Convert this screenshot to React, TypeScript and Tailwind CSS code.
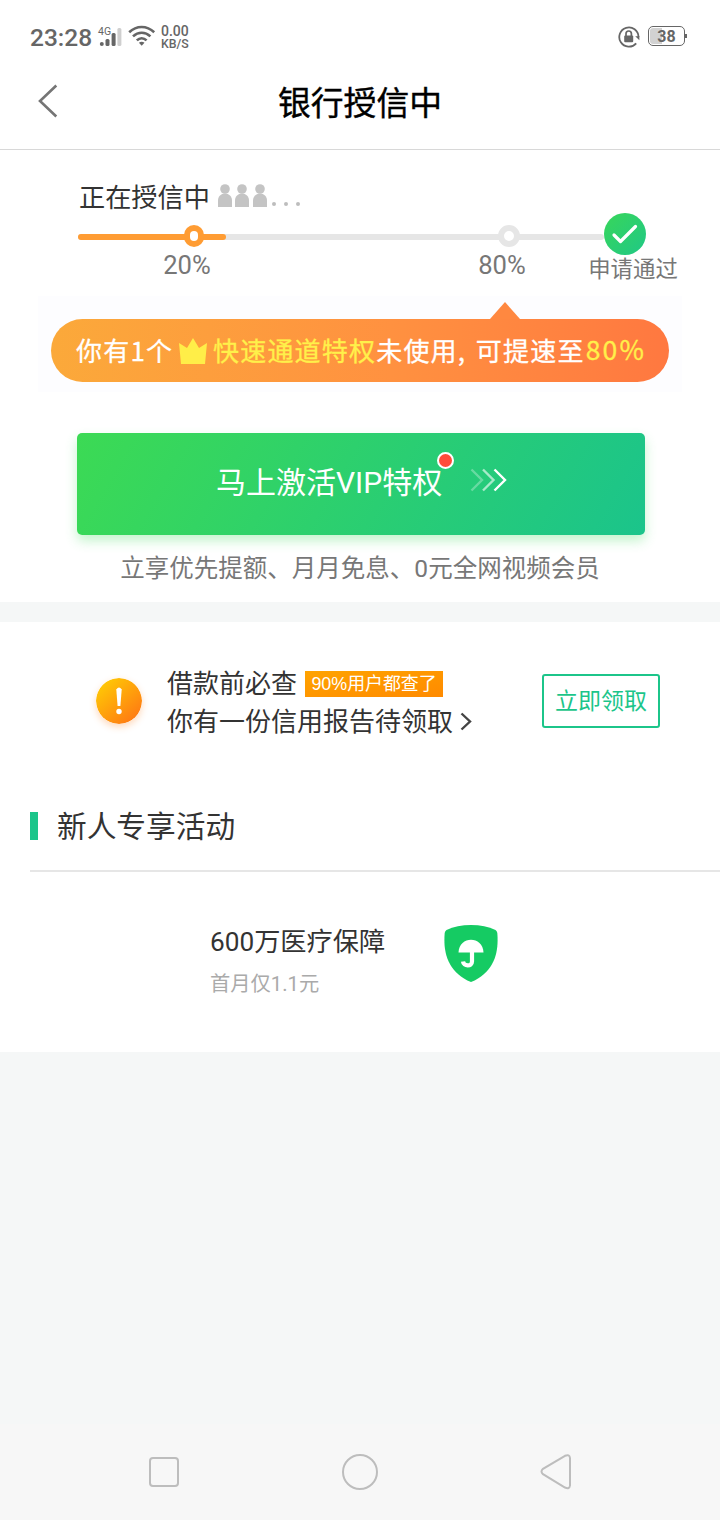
import React from "react";

function StatusBar() {
  return (
    <div className="flex items-center h-[54px] pt-5 pl-[30px] pr-[33px] text-[#666666]">
      <span className="w-[62px] pt-0.5 text-[24.5px] leading-none font-medium whitespace-nowrap">23:28</span>
      {/* Señal */}
      <svg className="ml-[5px]" width="27" height="24" viewBox="0 0 27 24" fill="#666666">
        <text x="1" y="10" fontSize="10.5">4G</text>
        <circle cx="4.8" cy="19" r="2" />
        <rect x="8.5" y="14" width="4" height="7" rx="1.5" />
        <rect x="14.6" y="8" width="4" height="13" rx="1.5" />
        <rect x="20.4" y="3" width="4" height="18" rx="1.5" fill="#cfcfcf" />
      </svg>
      {/* Wifi */}
      <svg className="ml-1 mb-0.5" width="28" height="24" viewBox="0 0 28 24" fill="none" stroke="#666666" strokeWidth="2.6">
        <path d="M1.2 8.2C8.5 1.2 18.8 1.2 26.2 8.2" />
        <path d="M5 12.4C10.2 7.5 17.2 7.5 22.4 12.4" />
        <path d="M8.8 16.4C11.8 13.5 15.6 13.5 18.6 16.4" />
        <path d="M10.9 18.8Q13.7 16.8 16.5 18.8L13.7 21.8Z" fill="#666666" stroke="none" />
      </svg>
      <div className="ml-[5px] pt-0.5 text-[14px] leading-[13px] font-medium">
        <p>0.00</p>
        <p className="text-[12.3px]">KB/S</p>
      </div>
      {/* Bloqueo de rotación */}
      <svg className="ml-auto" width="22" height="22" viewBox="0 0 22 22">
        <path d="M18.2 17.3A9.6 9.6 0 1 1 20.5 11" fill="none" stroke="#666666" strokeWidth="1.8" />
        <path d="M17.2 10.3H21.4V14.2Z" fill="#666666" />
        <rect x="6.2" y="9.5" width="9" height="6.8" rx="1" fill="#666666" />
        <path d="M8 10V7.7a2.7 2.7 0 0 1 5.4 0V10" fill="none" stroke="#666666" strokeWidth="1.7" />
      </svg>
      <div className="flex items-center ml-2 mb-0.5">
        <div className="flex items-center justify-center w-[37px] h-5 border-[1.5px] border-[#666666] rounded-[5px] bg-[linear-gradient(90deg,#d2d2d2_38%,#ffffff_38%)] bg-clip-content p-px text-[16px] leading-none font-bold">
          <span className="pt-0.5">38</span>
        </div>
        <div className="w-0.5 h-1 bg-[#666666]" />
      </div>
    </div>
  );
}

function Header() {
  return (
    <header className="flex items-center h-24 pl-[38px] pr-[58px] border-b border-[#d8d8d8]">
      <svg className="mb-0.5" width="20" height="34" viewBox="0 0 20 34" fill="none" stroke="#757575" strokeWidth="2.6">
        <path d="M18.3 1.5L2 17L18.3 32.5" />
      </svg>
      <h1 className="flex-1 pt-[5px] text-center text-[32.8px] leading-none font-normal text-black [-webkit-text-stroke:0.4px_#000]">银行授信中</h1>
    </header>
  );
}

function Person() {
  return (
    <svg width="14" height="24" viewBox="0 0 14 24" fill="#c4c4c4">
      <circle cx="7" cy="5" r="4.8" />
      <path d="M0 23V16.5C0 12.5 3 9.5 7 9.5s7 3 7 7V23Z" />
    </svg>
  );
}

function Progress() {
  return (
    <div className="pt-[29px]">
      <div className="flex items-center h-9 pl-[79px]">
        <span className="pt-[3px] text-[26.2px] leading-none text-[#333333]">正在授信中</span>
        <div className="flex gap-[3.5px] ml-[8px] mb-[2px]">
          <Person />
          <Person />
          <Person />
        </div>
        <div className="flex gap-2 ml-[5px] mt-3.5">
          <i className="w-1 h-1 rounded-full bg-[#bdbdbd]" />
          <i className="w-1 h-1 rounded-full bg-[#bdbdbd]" />
          <i className="w-1 h-1 rounded-full bg-[#bdbdbd]" />
        </div>
      </div>
      {/* Barra de progreso */}
      <div className="relative flex items-center h-[42px] -mt-0.5 ml-[78px] w-[568px]">
        <div className="w-[526px] h-1.5 mt-1.5 rounded-full bg-[#e6e6e6]">
          <div className="w-[148px] h-1.5 rounded-full bg-[#ff9c33]" />
        </div>
        <div className="absolute left-[106px] top-[12px] w-5 h-[22px] rounded-full bg-[#ff9c33] flex items-center justify-center">
          <div className="w-2 h-[10px] rounded-full bg-white" />
        </div>
        <div className="absolute left-[420px] top-[12px] w-[22px] h-[22px] rounded-full border-[6px] border-[#e6e6e6] bg-white" />
        <svg className="ml-auto shrink-0" width="42" height="42" viewBox="0 0 42 42">
          <defs>
            <linearGradient id="ok" x1="0" y1="0" x2="1" y2="1">
              <stop offset="0" stopColor="#38d65a" />
              <stop offset="1" stopColor="#20c886" />
            </linearGradient>
          </defs>
          <circle cx="21" cy="21" r="21" fill="url(#ok)" />
          <path d="M10 22L16.5 28.5L31.5 13.5" fill="none" stroke="#fff" strokeWidth="3.2" strokeLinecap="round" strokeLinejoin="round" />
        </svg>
      </div>
      <div className="flex h-[41px] pl-[137px] text-[#777777] text-[25.6px] leading-[21px]">
        <span className="w-[100px] text-center">20%</span>
        <span className="w-[100px] ml-[215px] text-center">80%</span>
        <span className="w-[100px] ml-[31px] pt-1 text-center text-[22.4px]">申请通过</span>
      </div>
    </div>
  );
}

function Banner() {
  return (
    <div className="mx-[38px] h-24 pt-1.5 pl-[13px] pr-[13px] bg-[#fdfdff]">
      <svg className="ml-[438px]" width="32" height="17" viewBox="0 0 32 17">
        <path d="M16 0L31 17H1Z" fill="#ff8840" />
      </svg>
      <div className="flex items-center h-[63px] pl-[25px] rounded-full bg-linear-to-r from-[#fba93a] via-[#ff9140] via-55% to-[#ff7840] font-['Noto_Sans_CJK_SC',sans-serif] text-[26px] leading-none tracking-[1.2px] text-white [-webkit-text-stroke:0.3px_currentColor] whitespace-nowrap">
        <span className="w-[102px] pb-0.5">你有1个</span>
        <svg className="shrink-0" width="30" height="28" viewBox="0 0 30 28">
          <path d="M1 6L9 11L15 1L21 11L29 6L27 27H3Z" fill="#ffee48" />
        </svg>
        <span className="ml-[5px] pb-0.5 text-[#fff04a]">快速通道特权</span>
        <span className="pb-0.5">未使用</span>
        <span className="w-[18px] pb-0.5">,</span>
        <span className="pb-0.5">可提速至</span>
        <span className="ml-px pb-0.5 text-[26.5px] tracking-[2.2px] text-[#fff04a]">80%</span>
      </div>
    </div>
  );
}

function VipButton() {
  return (
    <button className="relative flex items-center mt-[41px] ml-[77px] w-[568px] h-[102px] pl-[139px] rounded-[5px] bg-[linear-gradient(120deg,#3cda54,#1bc48b)] shadow-[0_6px_12px_rgba(60,220,90,0.3)]">
      <span className="-mt-0.5 text-[30px] leading-none text-white whitespace-nowrap">马上激活VIP特权</span>
      <span className="absolute left-[360px] top-[19px] w-[17px] h-[17px] rounded-full border-2 border-white bg-[#ff4b3a]" />
      <svg className="absolute left-[393px] top-[35px]" width="38" height="24" viewBox="0 0 38 24" fill="none" stroke="#fff" strokeWidth="2.4">
        <path d="M1.5 1.5L12 12L1.5 22.5" opacity="0.3" />
        <path d="M13 1.5L23.5 12L13 22.5" opacity="0.6" />
        <path d="M24.5 1.5L35 12L24.5 22.5" />
      </svg>
    </button>
  );
}

function CreditReport() {
  return (
    <div className="flex items-center h-[158px] pl-[96px] pr-[60px]">
      <svg className="rounded-full shadow-[0_3px_7px_rgba(255,130,30,0.3)]" width="46" height="46" viewBox="0 0 46 46">
        <defs>
          <linearGradient id="warn" x1="0.1" y1="0.1" x2="0.8" y2="0.9">
            <stop offset="0" stopColor="#ffca05" />
            <stop offset="1" stopColor="#ff7d12" />
          </linearGradient>
        </defs>
        <circle cx="23" cy="23" r="23" fill="url(#warn)" />
        <path d="M20.3 11.5Q23 7.5 25.7 11.5L24.4 28H21.6Z" fill="#fff" />
        <circle cx="23" cy="33.5" r="2.7" fill="#fff" />
      </svg>
      <div className="ml-[25px] pt-[3px] text-[26px] leading-[38px] text-[#333333] whitespace-nowrap">
        <div className="flex items-center">
          借款前必查
          <span className="ml-[8px] w-[138px] h-[26px] bg-linear-to-br from-[#ffa300] to-[#ff8a00] text-center font-['Liberation_Sans','Noto_Sans_CJK_SC',sans-serif] text-[17.9px] leading-[27px] text-white">
            90%用户都查了
          </span>
        </div>
        <div className="flex items-center">
          你有一份信用报告待领取
          <svg className="ml-[7px]" width="12" height="20" viewBox="0 0 12 20" fill="none" stroke="#444444" strokeWidth="2.4">
            <path d="M1.5 1.5L10 9.5L1.5 17.5" />
          </svg>
        </div>
      </div>
      <button className="ml-auto w-[118px] h-[54px] border-2 border-[#1cc58a] rounded-[3px] text-[23px] leading-none text-[#1cc58a]">立即领取</button>
    </div>
  );
}

function Activities() {
  return (
    <div>
      <div className="flex items-center h-[92px] ml-[30px] pt-0.5 border-b-2 border-[#e6e6e6]">
        <div className="w-2 h-7 bg-[#1cc58a]" />
        <h2 className="ml-[19px] pt-0.5 text-[29.7px] leading-none text-[#333333]">新人专享活动</h2>
      </div>
      <div className="flex pl-[210px] pt-[53px] h-[180px]">
        <div className="w-[234px] pt-px">
          <p className="text-[26.2px] leading-8 text-[#333333]">600万医疗保障</p>
          <p className="mt-3 text-[20.3px] leading-7 text-[#aaaaaa]">首月仅1.1元</p>
        </div>
        <svg width="54" height="57" viewBox="0 0 54 57">
          <path d="M27 0Q41 0 51.5 5Q53 6 53.3 8C55 28 50 47 27 57C4 47 -1 28 0.7 8Q1 6 2.5 5Q13 0 27 0Z" fill="#15cb63" />
          <path d="M14.5 27.5C15 10.5 39 10.5 39.5 27.5Z" fill="#fff" />
          <path d="M28 26V36.5C28 42 19.5 41.5 19 36.5" fill="none" stroke="#fff" strokeWidth="4.2" />
        </svg>
      </div>
    </div>
  );
}

function NavBar() {
  return (
    <nav className="flex items-center justify-between h-24 pl-[149px] pr-[148px] bg-[#f7f7f7]">
      <div className="w-[30px] h-[30px] border-2 border-[#bdbdbd] rounded-[4px]" />
      <div className="w-9 h-9 border-2 border-[#bdbdbd] rounded-full" />
      <svg width="32" height="36" viewBox="0 0 32 36" fill="none" stroke="#bdbdbd" strokeWidth="2">
        <path d="M25 1.8L3 14.8Q0 17.5 3 20.2L25 33.5Q29.5 35.5 30 31.5V4Q29.5 0 25 1.8Z" />
      </svg>
    </nav>
  );
}

export default function App() {
  return (
    <div className="flex flex-col w-[720px] h-[1520px] overflow-hidden bg-[#f5f7f7] font-[Roboto,'Noto_Sans_CJK_SC',sans-serif]">
      <div className="bg-white">
        <StatusBar />
        <Header />
      </div>
      <section className="h-[452px] bg-white">
        <Progress />
        <Banner />
        <VipButton />
        <p className="mt-[22px] text-center text-[24.5px] leading-6 text-[#777777]">立享优先提额、月月免息、0元全网视频会员</p>
      </section>
      <section className="h-[430px] mt-5 bg-white">
        <CreditReport />
        <Activities />
      </section>
      <div className="mt-auto">
        <NavBar />
      </div>
    </div>
  );
}
